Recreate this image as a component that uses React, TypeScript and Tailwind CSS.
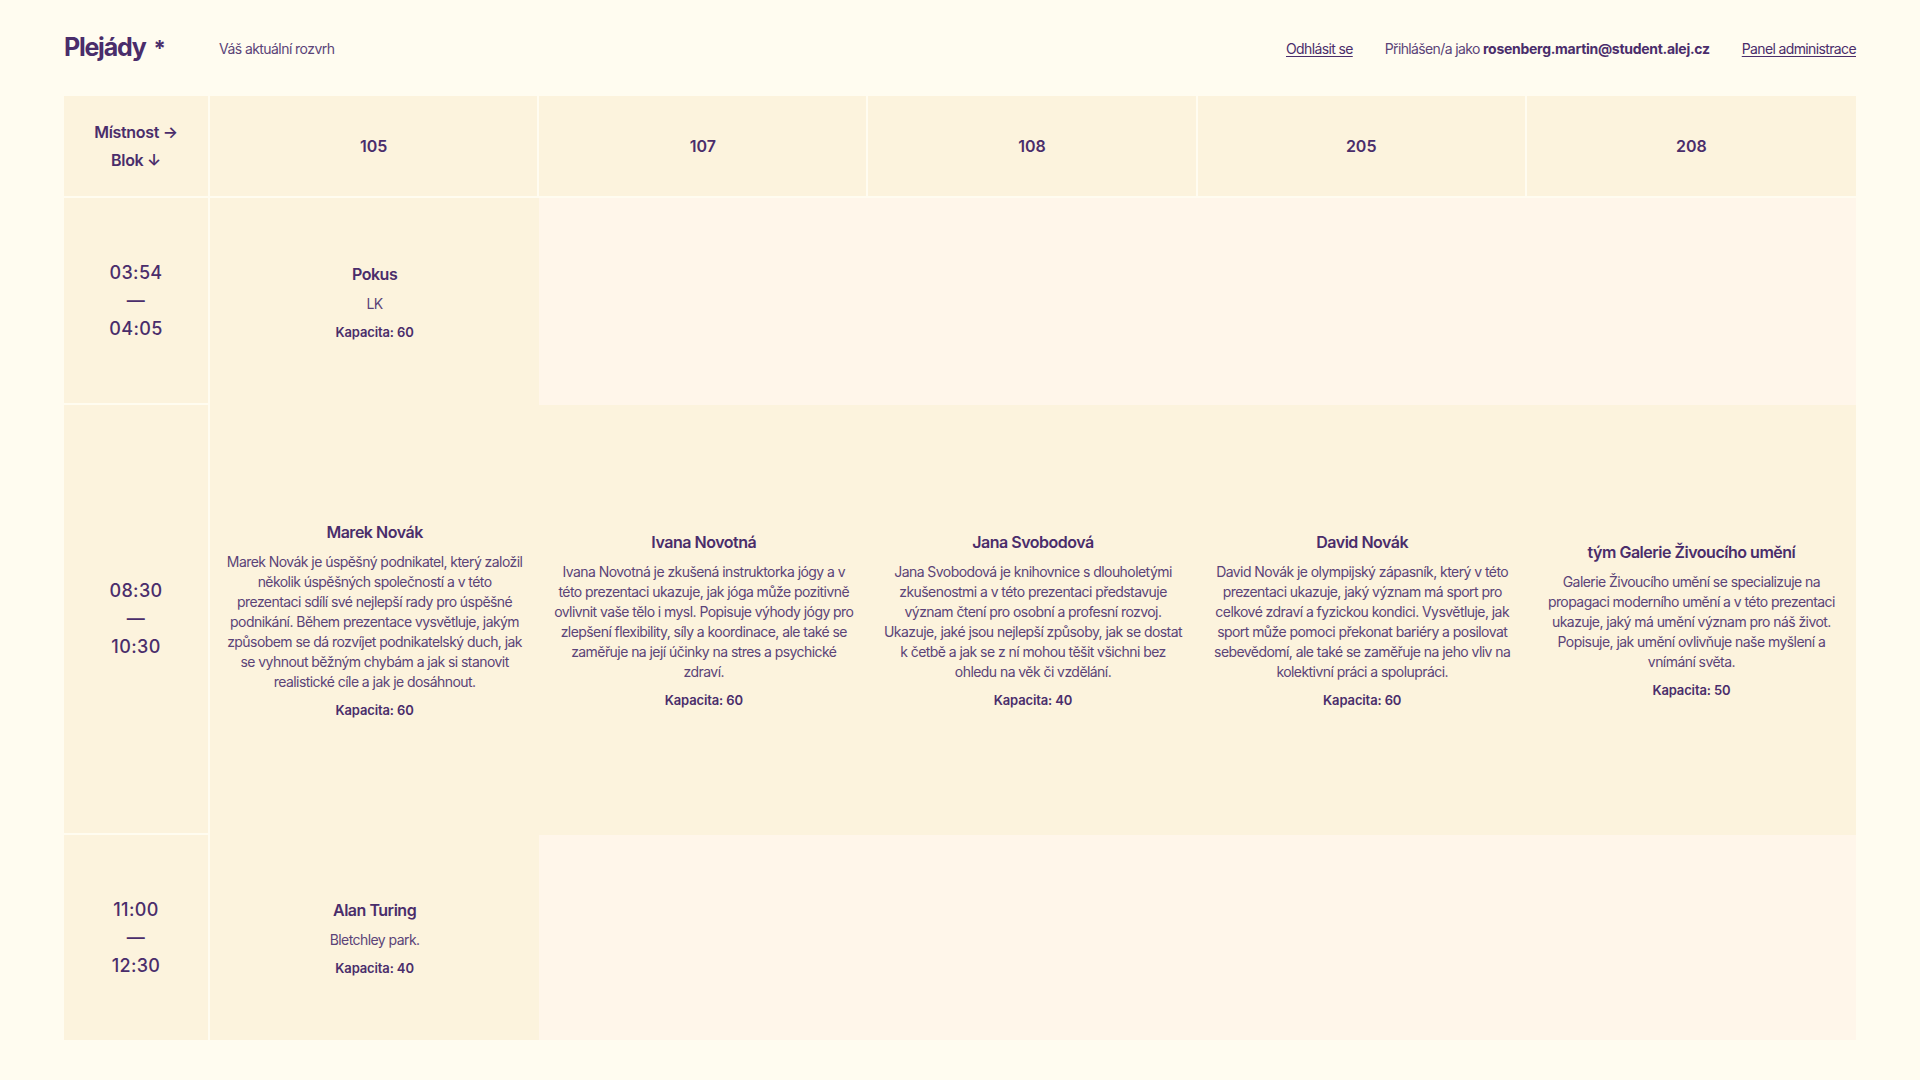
type Event = {
  title: string
  desc: string[]
  capacity: number
}

const rooms = ["105", "107", "108", "205", "208"]

const blocks: { from: string; to: string; events: (Event | null)[] }[] = [
  {
    from: "03:54",
    to: "04:05",
    events: [{ title: "Pokus", desc: ["LK"], capacity: 60 }, null, null, null, null],
  },
  {
    from: "08:30",
    to: "10:30",
    events: [
      {
        title: "Marek Novák",
        desc: [
          "Marek Novák je úspěšný podnikatel, který založil",
          "několik úspěšných společností a v této",
          "prezentaci sdílí své nejlepší rady pro úspěšné",
          "podnikání. Během prezentace vysvětluje, jakým",
          "způsobem se dá rozvíjet podnikatelský duch, jak",
          "se vyhnout běžným chybám a jak si stanovit",
          "realistické cíle a jak je dosáhnout.",
        ],
        capacity: 60,
      },
      {
        title: "Ivana Novotná",
        desc: [
          "Ivana Novotná je zkušená instruktorka jógy a v",
          "této prezentaci ukazuje, jak jóga může pozitivně",
          "ovlivnit vaše tělo i mysl. Popisuje výhody jógy pro",
          "zlepšení flexibility, síly a koordinace, ale také se",
          "zaměřuje na její účinky na stres a psychické",
          "zdraví.",
        ],
        capacity: 60,
      },
      {
        title: "Jana Svobodová",
        desc: [
          "Jana Svobodová je knihovnice s dlouholetými",
          "zkušenostmi a v této prezentaci představuje",
          "význam čtení pro osobní a profesní rozvoj.",
          "Ukazuje, jaké jsou nejlepší způsoby, jak se dostat",
          "k četbě a jak se z ní mohou těšit všichni bez",
          "ohledu na věk či vzdělání.",
        ],
        capacity: 40,
      },
      {
        title: "David Novák",
        desc: [
          "David Novák je olympijský zápasník, který v této",
          "prezentaci ukazuje, jaký význam má sport pro",
          "celkové zdraví a fyzickou kondici. Vysvětluje, jak",
          "sport může pomoci překonat bariéry a posilovat",
          "sebevědomí, ale také se zaměřuje na jeho vliv na",
          "kolektivní práci a spolupráci.",
        ],
        capacity: 60,
      },
      {
        title: "tým Galerie Živoucího umění",
        desc: [
          "Galerie Živoucího umění se specializuje na",
          "propagaci moderního umění a v této prezentaci",
          "ukazuje, jaký má umění význam pro náš život.",
          "Popisuje, jak umění ovlivňuje naše myšlení a",
          "vnímání světa.",
        ],
        capacity: 50,
      },
    ],
  },
  {
    from: "11:00",
    to: "12:30",
    events: [{ title: "Alan Turing", desc: ["Bletchley park."], capacity: 40 }, null, null, null, null],
  },
]

function EventCell({ event }: { event: Event | null }) {
  if (!event) return <div className="bg-[#fff6ea]" />
  return (
    <div className="flex flex-col items-center justify-center bg-[#fcf3dd] px-2 text-center">
      <h3 className="text-[16px] font-semibold leading-6 tracking-[-0.03em]">{event.title}</h3>
      <p className="mt-2 text-[14px] leading-5 tracking-[-0.04em] text-[#5b4478]">
        {event.desc.map((line) => (
          <span key={line} className="block whitespace-nowrap">
            {line}
          </span>
        ))}
      </p>
      <p className="mt-2 text-[13px] font-semibold leading-5 tracking-[-0.01em]">Kapacita: {event.capacity}</p>
    </div>
  )
}

export default function App() {
  return (
    <div className="min-h-screen bg-[#fffcf0] px-16 font-['Inter',sans-serif] text-[#4a2d6b]">
      <header className="flex h-24 items-center">
        <div className="flex w-[155px] items-center">
          <span className="text-[25px] font-bold tracking-[-0.05em]">Plejády</span>
          <span className="ml-2 text-[22px] font-bold leading-none">*</span>
        </div>
        <span className="text-[14px] tracking-[-0.04em] text-[#5b4478]">Váš aktuální rozvrh</span>
        <nav className="ml-auto flex items-center gap-8 text-[14px] tracking-[-0.045em]">
          <a href="#" className="underline underline-offset-2">Odhlásit se</a>
          <span className="text-[#5b4478]">
            Přihlášen/a jako <b className="font-bold text-[#4a2d6b] tracking-[-0.02em]">rosenberg.martin@student.alej.cz</b>
          </span>
          <a href="#" className="underline underline-offset-2">Panel administrace</a>
        </nav>
      </header>

      <div className="grid grid-cols-[146px_repeat(5,1fr)] grid-rows-[102px_207px_430px_205px]">
        <div className="flex flex-col items-center justify-center border-b-2 border-r-2 border-[#fffcf0] bg-[#fcf3dd] text-[16px] font-semibold leading-7 tracking-[-0.02em]">
          <span>Místnost →</span>
          <span>Blok ↓</span>
        </div>
        {rooms.map((r, i) => (
          <div
            key={r}
            className={
              "flex items-center justify-center border-b-2 border-[#fffcf0] bg-[#fcf3dd] text-[16px] font-semibold " +
              (i < rooms.length - 1 ? "border-r-2" : "")
            }
          >
            {r}
          </div>
        ))}

        {blocks.map((b, bi) => (
          <>
            <div
              key={b.from}
              className={
                "flex flex-col items-center justify-center border-r-2 border-[#fffcf0] bg-[#fcf3dd] text-[18px] font-medium leading-7 tracking-[0.02em] " +
                (bi < blocks.length - 1 ? "border-b-2" : "")
              }
            >
              <span>{b.from}</span>
              <span>—</span>
              <span>{b.to}</span>
            </div>
            {b.events.map((e, ei) => (
              <EventCell key={b.from + ei} event={e} />
            ))}
          </>
        ))}
      </div>
    </div>
  )
}
